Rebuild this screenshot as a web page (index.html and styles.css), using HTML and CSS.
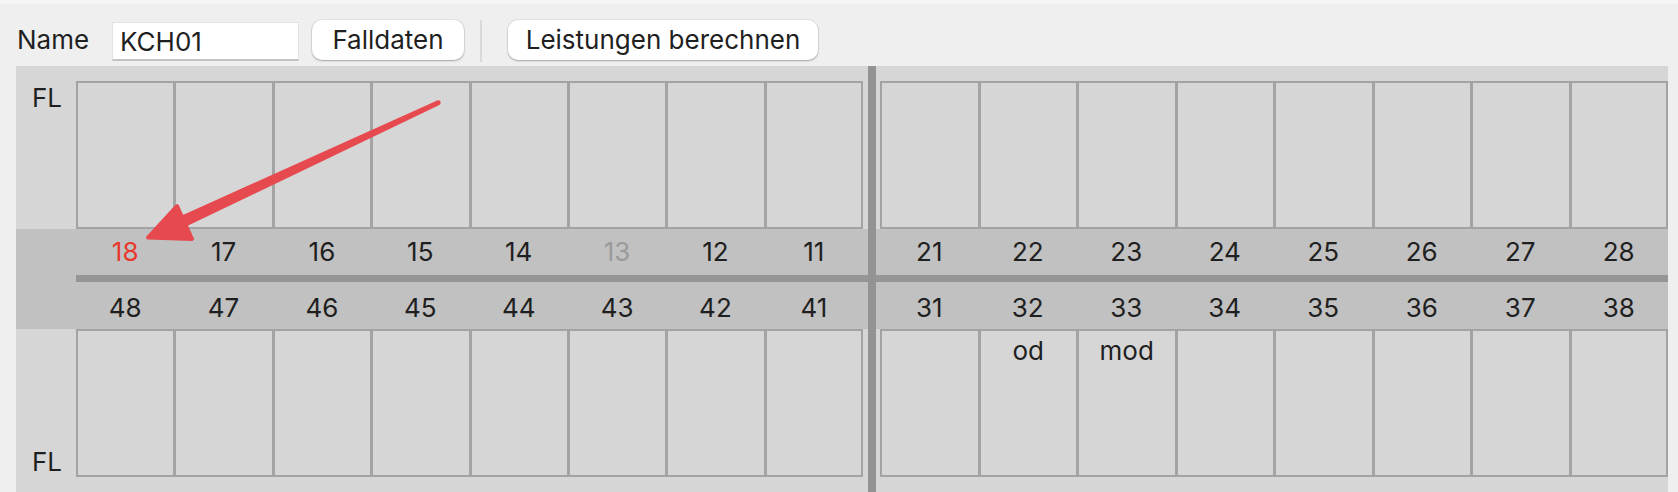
FILE: index.html
```html
<!DOCTYPE html>
<html lang="de">
<head>
<meta charset="utf-8">
<title>Zahnschema</title>
<link rel="stylesheet" href="styles.css">
</head>
<body>
<div class="topstrip"></div>
<div class="toolbar">
  <span class="label">Name</span>
  <input class="name-input" type="text" value="KCH01">
  <button class="btn btn-falldaten">Falldaten</button>
  <span class="sep"></span>
  <button class="btn btn-leistungen">Leistungen berechnen</button>
</div>
<div class="panel">
  <div class="band"></div>
  <div class="fl fl-top">FL</div>
  <div class="cells upper half-left">
    <div class="cell"></div><div class="cell"></div><div class="cell"></div><div class="cell"></div>
    <div class="cell"></div><div class="cell"></div><div class="cell"></div><div class="cell"></div>
  </div>
  <div class="cells upper half-right">
    <div class="cell"></div><div class="cell"></div><div class="cell"></div><div class="cell"></div>
    <div class="cell"></div><div class="cell"></div><div class="cell"></div><div class="cell"></div>
  </div>
  <div class="nums row1 half-left">
    <span class="num num-red">18</span><span class="num">17</span><span class="num">16</span><span class="num">15</span>
    <span class="num">14</span><span class="num num-gray">13</span><span class="num">12</span><span class="num">11</span>
  </div>
  <div class="nums row1 half-right">
    <span class="num">21</span><span class="num">22</span><span class="num">23</span><span class="num">24</span>
    <span class="num">25</span><span class="num">26</span><span class="num">27</span><span class="num">28</span>
  </div>
  <div class="hdiv"></div>
  <div class="nums row2 half-left">
    <span class="num">48</span><span class="num">47</span><span class="num">46</span><span class="num">45</span>
    <span class="num">44</span><span class="num">43</span><span class="num">42</span><span class="num">41</span>
  </div>
  <div class="nums row2 half-right">
    <span class="num">31</span><span class="num">32</span><span class="num">33</span><span class="num">34</span>
    <span class="num">35</span><span class="num">36</span><span class="num">37</span><span class="num">38</span>
  </div>
  <div class="cells lower half-left">
    <div class="cell"></div><div class="cell"></div><div class="cell"></div><div class="cell"></div>
    <div class="cell"></div><div class="cell"></div><div class="cell"></div><div class="cell"></div>
  </div>
  <div class="cells lower half-right">
    <div class="cell"></div><div class="cell">od</div><div class="cell">mod</div><div class="cell"></div>
    <div class="cell"></div><div class="cell"></div><div class="cell"></div><div class="cell"></div>
  </div>
  <div class="fl fl-bottom">FL</div>
  <div class="vdiv"></div>
</div>
<svg class="arrow" width="1678" height="492" viewBox="0 0 1678 492" aria-hidden="true">
  <polygon class="arrow-shape" points="439.4,105.0 437.2,100.4 177.4,217.5 182.4,228.3"/>
  <circle class="arrow-shape" cx="438.3" cy="102.7" r="2.4"/>
  <polygon class="arrow-shape arrow-head" points="148,237.5 177,206 192,239"/>
</svg>
</body>
</html>
```
FILE: styles.css
```css
html, body {
  margin: 0;
  padding: 0;
}

body {
  position: relative;
  width: 1678px;
  height: 492px;
  overflow: hidden;
  background: #efefef;
  font-family: Inter, "Liberation Sans", sans-serif;
  font-size: 26px;
  line-height: 30px;
  color: #1f1f1f;
}

.topstrip {
  height: 4px;
  background: #f5f5f5;
}

.toolbar {
  display: flex;
  align-items: center;
  height: 52px;
  padding: 10px 0 0 17px;
}

.label {
  width: 95px;
  flex: none;
}

.name-input {
  box-sizing: border-box;
  width: 187px;
  height: 39px;
  margin: 3px 0 0 0;
  padding: 0 7px;
  border: 1px solid #e2e2e2;
  border-bottom: 2px solid #c2c2c2;
  border-radius: 0;
  background: #fff;
  font: inherit;
  color: #1f1f1f;
  outline: none;
}

.btn {
  box-sizing: border-box;
  height: 40px;
  padding: 0;
  border: none;
  border-radius: 10px;
  background: #fff;
  box-shadow: 0 0 0 1px rgba(0, 0, 0, 0.05), 0 1px 2px rgba(0, 0, 0, 0.28);
  font: inherit;
  color: #1f1f1f;
  text-align: center;
  line-height: 38px;
}

.btn-falldaten {
  width: 152px;
  margin-left: 13px;
}

.sep {
  width: 2px;
  height: 42px;
  margin-left: 16px;
  margin-top: 2px;
  background: #d9d9d9;
}

.btn-leistungen {
  width: 310px;
  margin-left: 26px;
}

.panel {
  display: grid;
  grid-template-columns: 60px 787px 5px 8px 4px 788px;
  grid-template-rows: 15px 148px 46px 7px 47px 148px 15px;
  width: 1652px;
  margin-left: 16px;
  background: #d6d6d6;
}

.band {
  grid-row: 3 / 6;
  grid-column: 1 / -1;
  background: #c1c1c1;
}

.hdiv {
  grid-row: 4;
  grid-column: 2 / -1;
  background: #959595;
}

.vdiv {
  grid-row: 1 / -1;
  grid-column: 4;
  background: #939393;
}

.half-left {
  grid-column: 2;
}

.half-right {
  grid-column: 6;
}

.cells {
  display: grid;
  grid-template-columns: repeat(8, 1fr);
}

.cells.upper {
  grid-row: 2;
}

.cells.lower {
  grid-row: 6;
}

.cell {
  box-sizing: border-box;
  border: 2px solid #a3a3a3;
  margin-right: -1px;
  background: #d6d6d6;
  padding-top: 5px;
  text-align: center;
}

.cell:last-child {
  margin-right: 0;
}

.nums {
  display: grid;
  grid-template-columns: repeat(8, 1fr);
  align-items: center;
  text-align: center;
}

.nums.row1 {
  grid-row: 3;
}

.nums.row2 {
  grid-row: 5;
  padding-top: 5px;
}

.num-red {
  color: #e8392c;
}

.num-gray {
  color: #9a9a9a;
}

.fl {
  grid-column: 1;
  padding-left: 16px;
}

.fl-top {
  grid-row: 2;
  padding-top: 2px;
}

.fl-bottom {
  grid-row: 6;
  align-self: end;
}

.arrow {
  position: absolute;
  left: 0;
  top: 0;
  pointer-events: none;
}

.arrow-shape {
  fill: #e64a4f;
}

.arrow-head {
  stroke: #e64a4f;
  stroke-width: 4;
  stroke-linejoin: round;
}
```
